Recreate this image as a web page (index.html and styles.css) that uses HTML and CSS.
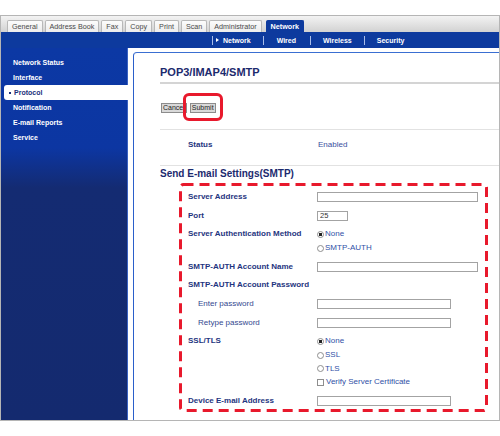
FILE: index.html
```html
<!DOCTYPE html>
<html>
<head>
<meta charset="utf-8">
<link rel="stylesheet" href="styles.css">
</head>
<body>
<div class="frame">
  <div class="tabbar">
    <span class="tab">General</span>
    <span class="tab">Address Book</span>
    <span class="tab">Fax</span>
    <span class="tab">Copy</span>
    <span class="tab">Print</span>
    <span class="tab">Scan</span>
    <span class="tab">Administrator</span>
    <span class="tab active">Network</span>
  </div>
  <div class="band">
    <span class="sep"></span>
    <span class="sn first"><span class="tri"></span>Network</span>
    <span class="sep"></span>
    <span class="sn wired">Wired</span>
    <span class="sep"></span>
    <span class="sn">Wireless</span>
    <span class="sep"></span>
    <span class="sn">Security</span>
  </div>
  <div class="main">
    <aside class="side">
      <ul class="menu">
        <li class="mi">Network Status</li>
        <li class="mi">Interface</li>
        <li class="mi cur"><span class="dot"></span>Protocol</li>
        <li class="mi">Notification</li>
        <li class="mi">E-mail Reports</li>
        <li class="mi">Service</li>
      </ul>
    </aside>
    <section class="panel">
      <h1 class="title">POP3/IMAP4/SMTP</h1>
      <div class="btns">
        <button class="btn">Cancel</button>
        <span class="ring"><button class="btn">Submit</button></span>
      </div>
      <div class="status">
        <span class="slbl">Status</span>
        <span class="sval">Enabled</span>
      </div>
      <h2 class="sect">Send E-mail Settings(SMTP)</h2>
      <div class="box">
        <svg class="dash" width="309" height="229" viewBox="0 0 309 229">
          <rect x="1.5" y="1.5" width="306" height="226" rx="3" ry="3" fill="none" stroke="#e8192c" stroke-width="3" stroke-dasharray="10 6"/>
        </svg>
        <div class="row">
          <span class="lbl">Server Address</span>
          <div class="val"><input class="inp wide" type="text"></div>
        </div>
        <div class="row">
          <span class="lbl">Port</span>
          <div class="val"><input class="inp port" type="text" value="25"></div>
        </div>
        <div class="row">
          <span class="lbl">Server Authentication Method</span>
          <div class="val">
            <div class="opt"><input class="radio" type="radio" name="auth" checked>None</div>
            <div class="opt"><input class="radio" type="radio" name="auth">SMTP-AUTH</div>
          </div>
        </div>
        <div class="row">
          <span class="lbl">SMTP-AUTH Account Name</span>
          <div class="val"><input class="inp wide" type="text"></div>
        </div>
        <div class="row">
          <span class="lbl">SMTP-AUTH Account Password</span>
          <div class="val"></div>
        </div>
        <div class="row">
          <span class="lbl sub">Enter password</span>
          <div class="val"><input class="inp mid" type="password"></div>
        </div>
        <div class="row">
          <span class="lbl sub">Retype password</span>
          <div class="val"><input class="inp mid" type="password"></div>
        </div>
        <div class="row">
          <span class="lbl">SSL/TLS</span>
          <div class="val">
            <div class="opt"><input class="radio" type="radio" name="ssl" checked>None</div>
            <div class="opt"><input class="radio" type="radio" name="ssl">SSL</div>
            <div class="opt"><input class="radio" type="radio" name="ssl">TLS</div>
            <div class="opt"><input class="check" type="checkbox">Verify Server Certificate</div>
          </div>
        </div>
        <div class="row">
          <span class="lbl">Device E-mail Address</span>
          <div class="val"><input class="inp mid" type="text"></div>
        </div>
      </div>
    </section>
  </div>
</div>
</body>
</html>
```
FILE: styles.css
```css
* { box-sizing: border-box; }
html, body { margin: 0; padding: 0; background: #fff; }
body { font-family: "Liberation Sans", Arial, sans-serif; }

.frame {
  margin-top: 15px;
  width: 500px;
  border: 1px solid #b5b5b5;
  display: flex;
  flex-direction: column;
}

/* top tabs */
.tabbar {
  height: 16px;
  background: linear-gradient(#f3f3f3, #d2d2d2);
  display: flex;
  align-items: flex-end;
  gap: 2px;
  padding-left: 6px;
}
.tab {
  height: 12px;
  line-height: 11px;
  padding: 0 4px;
  font-size: 7.2px;
  color: #4a4a4a;
  background: linear-gradient(#fcfcfc, #ececec);
  border: 1px solid #b8b8b8;
  border-bottom: 0;
  border-radius: 2px 2px 0 0;
  white-space: nowrap;
}
.tab.active {
  margin-left: 2px;
  background: #0d3a9e;
  border-color: #0d3a9e;
  color: #fff;
  font-weight: bold;
}

/* blue sub navigation band */
.band {
  height: 16px;
  background: #0d3a9e;
  display: flex;
  align-items: center;
  padding-left: 211px;
}
.sep {
  width: 1px;
  height: 9px;
  background: #a9bde9;
}
.sn {
  font-size: 7px;
  font-weight: bold;
  color: #fff;
  padding: 0 12px;
  display: flex;
  align-items: center;
  white-space: nowrap;
}
.sn.first { padding-left: 3px; }
.sn.wired { padding: 0 14px 0 13px; }
.tri {
  width: 0;
  height: 0;
  border-left: 3px solid #fff;
  border-top: 2px solid transparent;
  border-bottom: 2px solid transparent;
  margin-right: 4px;
}

/* main */
.main {
  height: 372px;
  display: flex;
}
.side {
  width: 127px;
  flex: none;
  background: linear-gradient(#0c38a4 0, #0c36a2 100px, #142b72 140px, #142a6f 100%);
  border-right: 1px solid #3a62c2;
}
.menu {
  list-style: none;
  margin: 0;
  padding: 7px 0 0 0;
}
.mi {
  height: 15px;
  line-height: 15px;
  padding-left: 12px;
  font-size: 7px;
  font-weight: bold;
  color: #fff;
  white-space: nowrap;
}
.mi.cur {
  margin-left: 3px;
  margin-right: -1px;
  padding-left: 5px;
  background: #fff;
  color: #1a2f7a;
  border-radius: 3px 0 0 3px;
  display: flex;
  align-items: center;
}
.dot {
  width: 2px;
  height: 2px;
  background: #1a2f7a;
  margin-right: 3px;
}

.panel {
  flex: 1;
  margin-left: 5px;
  margin-top: 4px;
  border-left: 1px solid #2a5fca;
  border-top: 1px solid #3a6fd2;
  border-top-left-radius: 4px;
  padding-left: 26px;
  background: #fff;
}
.title {
  margin: 12px 0 0 0;
  font-size: 11px;
  line-height: 14px;
  font-weight: bold;
  color: #1c2a6e;
  padding-bottom: 3px;
  border-bottom: 2px solid #d4d4d4;
}
.btns {
  display: flex;
  align-items: flex-start;
  height: 27px;
  margin-top: 9px;
  margin-bottom: 9px;
  padding-left: 1px;
  gap: 3px;
}
.btn {
  margin-top: 10px;
  height: 10px;
  padding: 0 1px;
  font-family: "Liberation Sans", Arial, sans-serif;
  font-size: 7px;
  line-height: 8px;
  color: #222;
  background: #d9d9d9;
  border: 1px solid #8c8c8c;
  border-radius: 0;
}
.ring {
  position: relative;
  display: flex;
}
.ring::after {
  content: "";
  position: absolute;
  left: -7px;
  right: -7px;
  top: 0;
  bottom: -8px;
  border: 3px solid #e8192c;
  border-radius: 6px;
  pointer-events: none;
}
.status {
  display: flex;
  border-top: 1px solid #e2e2e2;
  border-bottom: 1px solid #e2e2e2;
  padding: 9px 0 14px 28px;
  line-height: 12px;
  font-size: 8px;
}
.slbl {
  width: 130px;
  font-weight: bold;
  color: #1f3580;
}
.sval { color: #3a4f9e; }
.sect {
  margin: 2px 0 0 0;
  font-size: 10px;
  line-height: 12px;
  font-weight: bold;
  color: #1c2a6e;
}

/* settings box */
.box {
  position: relative;
  width: 309px;
  margin: 3px 0 0 19px;
  padding: 7px 0 4.4px 9px;
  display: flex;
  flex-direction: column;
  gap: 4.7px;
}
.dash {
  position: absolute;
  left: 0;
  top: 0;
  pointer-events: none;
}
.row {
  display: grid;
  grid-template-columns: 129px 1fr;
  font-size: 8px;
}
.lbl {
  height: 14px;
  line-height: 14px;
  font-weight: bold;
  color: #1f3580;
  white-space: nowrap;
}
.lbl.sub {
  font-weight: normal;
  padding-left: 10px;
  color: #34498f;
}
.val {
  display: flex;
  flex-direction: column;
  min-height: 14px;
}
.inp {
  margin: 2px 0 0 0;
  height: 10px;
  padding: 0 2px;
  border: 1px solid #a3a3a3;
  background: #fff;
  font-family: "Liberation Sans", Arial, sans-serif;
  font-size: 7.5px;
  color: #333;
  outline: none;
}
.inp.wide { width: 161px; }
.inp.mid { width: 134px; }
.inp.port { width: 31px; }
.opt {
  height: 13.5px;
  line-height: 13.5px;
  display: flex;
  align-items: center;
  color: #3050a6;
  white-space: nowrap;
}
.opt:first-child {
  height: 14px;
  line-height: 14px;
}
.radio {
  appearance: none;
  -webkit-appearance: none;
  width: 7px;
  height: 7px;
  margin: 0 1px 0 0;
  border: 1px solid #8e8e8e;
  border-radius: 50%;
  background: #fff;
}
.radio:checked {
  background: radial-gradient(circle, #222 0, #222 1.5px, #fff 2px);
}
.check {
  appearance: none;
  -webkit-appearance: none;
  width: 7px;
  height: 7px;
  margin: 0 2px 0 0;
  border: 1px solid #8e8e8e;
  background: #fff;
}
```
